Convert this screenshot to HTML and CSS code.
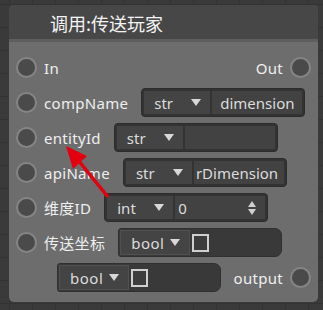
FILE: index.html
```html
<!DOCTYPE html>
<html>
<head>
<meta charset="utf-8">
<link rel="stylesheet" href="styles.css">
</head>
<body>
<div class="canvas">
  <div class="node">
    <div class="node-header">调用:传送玩家</div>
    <div class="node-sep"></div>
    <div class="node-body">
      <div class="row">
        <span class="pin"></span>
        <span class="label">In</span>
        <span class="spacer"></span>
        <span class="label out">Out</span>
        <span class="pin"></span>
      </div>
      <div class="row">
        <span class="pin"></span>
        <span class="label">compName</span>
        <div class="combo">
          <div class="drop"><span>str</span><span class="tri"></span></div>
          <div class="field">dimension</div>
        </div>
      </div>
      <div class="row">
        <span class="pin"></span>
        <span class="label">entityId</span>
        <div class="combo">
          <div class="drop"><span>str</span><span class="tri"></span></div>
          <div class="field"></div>
        </div>
      </div>
      <div class="row">
        <span class="pin"></span>
        <span class="label">apiName</span>
        <div class="combo">
          <div class="drop"><span>str</span><span class="tri"></span></div>
          <div class="field clip">rDimension</div>
        </div>
      </div>
      <div class="row">
        <span class="pin"></span>
        <span class="label">维度ID</span>
        <div class="combo">
          <div class="drop"><span>int</span><span class="tri"></span></div>
          <div class="field num"><span>0</span>
            <svg class="spin" width="10" height="16" viewBox="0 0 10 16"><path d="M5 1 L9 7 L1 7 Z M1 9 L9 9 L5 15 Z" fill="#cfcfcf"/></svg>
          </div>
        </div>
      </div>
      <div class="row">
        <span class="pin"></span>
        <span class="label">传送坐标</span>
        <div class="combo bool">
          <div class="drop"><span>bool</span><span class="tri"></span></div>
          <span class="check"></span>
        </div>
      </div>
      <div class="row last">
        <div class="combo bool">
          <div class="drop"><span>bool</span><span class="tri"></span></div>
          <span class="check"></span>
        </div>
        <span class="spacer"></span>
        <span class="label out">output</span>
        <span class="pin"></span>
      </div>
    </div>
  </div>
  <svg class="arrow" width="323" height="310" viewBox="0 0 323 310">
    <line x1="108" y1="197" x2="78" y2="160" stroke="#e3000f" stroke-width="3.5"/>
    <polygon points="66,146 87,156 73,169" fill="#e3000f"/>
  </svg>
</div>
</body>
</html>
```
FILE: styles.css
```css
html, body {
  margin: 0;
  padding: 0;
}
body {
  width: 323px;
  height: 310px;
  overflow: hidden;
  background-color: #3a3a3a;
  background-image:
    linear-gradient(to right, #333333 1px, transparent 1px),
    linear-gradient(to bottom, #333333 1px, transparent 1px);
  background-size: 23px 23px;
  background-position: 9px 4px;
  font-family: "Noto Sans", "Noto Sans CJK SC", sans-serif;
}
.canvas {
  position: relative;
  width: 323px;
  height: 310px;
  padding: 5px 5px 0 9px;
  box-sizing: border-box;
}
.node {
  width: 309px;
  height: 297px;
  border-radius: 5px;
  overflow: hidden;
  background: #6d6d6d;
  display: flex;
  flex-direction: column;
}
.node-header {
  height: 34px;
  background: #474747;
  color: #f4f4f4;
  font-family: "Noto Sans CJK SC", sans-serif;
  font-size: 18px;
  line-height: 36px;
  padding-left: 41px;
}
.node-sep {
  height: 3px;
  background: #5e5e5e;
}
.node-body {
  padding: 8px 0 0 0;
  flex: 1;
}
.row {
  height: 35px;
  display: flex;
  align-items: center;
  padding: 0 7px;
}
.pin {
  width: 17px;
  height: 17px;
  border-radius: 50%;
  background: #4a4a4a;
  border: 2px solid #858585;
  flex: none;
}
.label {
  color: #efefef;
  font-size: 15px;
  letter-spacing: 0.3px;
  margin-left: 7px;
  margin-right: 13px;
  white-space: nowrap;
}
.label.out {
  margin-left: 0;
  margin-right: 7px;
}
.spacer {
  flex: 1;
}
.combo {
  width: 164px;
  height: 29px;
  box-sizing: border-box;
  border: 1px solid #2c2c2c;
  border-radius: 4px;
  background: #333333;
  display: flex;
  padding: 2px;
  gap: 2px;
  flex: none;
}
.drop {
  width: 66px;
  background: #444444;
  display: flex;
  align-items: center;
  justify-content: space-between;
  padding: 0 9px 0 10px;
  box-sizing: border-box;
  color: #dcdcdc;
  font-size: 15px;
}
.tri {
  width: 0;
  height: 0;
  border-left: 5px solid transparent;
  border-right: 5px solid transparent;
  border-top: 7px solid #d8d8d8;
}
.field {
  flex: 1;
  background: #424242;
  color: #dcdcdc;
  font-size: 15px;
  display: flex;
  align-items: center;
  padding: 0 8px;
  overflow: hidden;
  white-space: nowrap;
}
.field.clip {
  padding: 0 0 0 2px;
}
.field.num {
  justify-content: space-between;
  padding: 0 8px 0 3px;
}
.combo.bool {
  background: #393939;
  border-color: #303030;
  border-radius: 3px 7px 7px 3px;
  padding: 1px;
  align-items: center;
}
.combo.bool .drop {
  height: 100%;
  width: 70px;
  border: 1px solid #505050;
  padding: 0 9px 0 10px;
  letter-spacing: 0.5px;
}
.check {
  width: 13px;
  height: 14px;
  border: 2px solid #cfcfcf;
  background: #3c3c3c;
  margin-left: 0;
}
.row.last {
  padding-left: 48px;
}
.arrow {
  position: absolute;
  left: 0;
  top: 0;
  pointer-events: none;
}
```
